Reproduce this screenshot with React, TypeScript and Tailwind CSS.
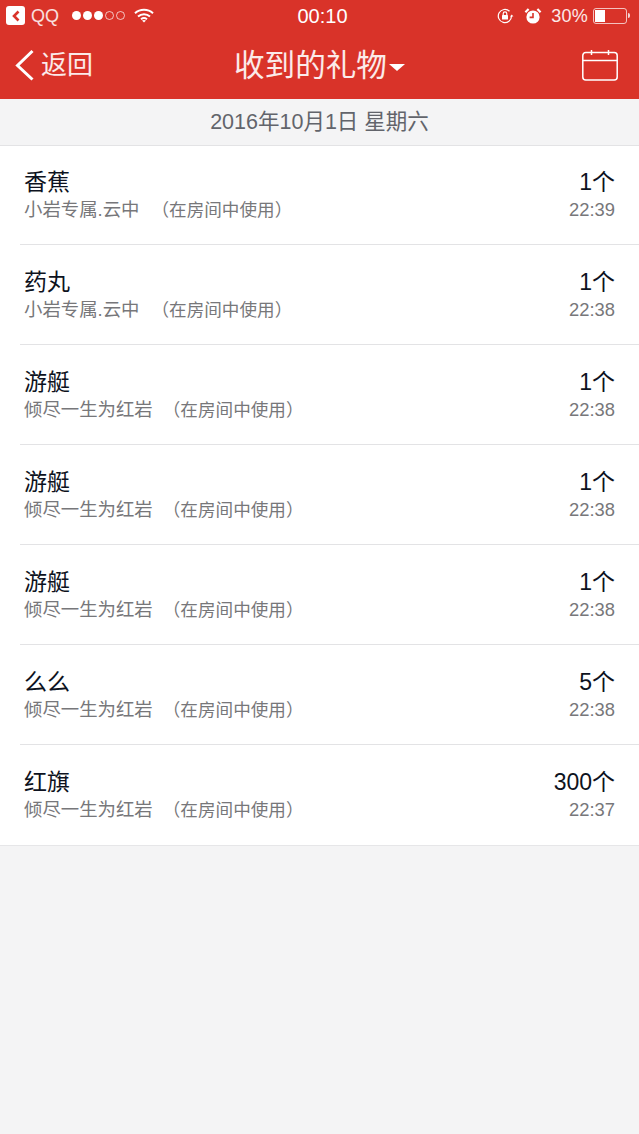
const font = { fontFamily: '"Liberation Sans", "Noto Sans CJK SC", sans-serif' };

const gifts = [
  { name: "香蕉", from: "小岩专属.云中", gap: "ml-[12px]", count: "1个", time: "22:39" },
  { name: "药丸", from: "小岩专属.云中", gap: "ml-[12px]", count: "1个", time: "22:38" },
  { name: "游艇", from: "倾尽一生为红岩", gap: "ml-[10px]", count: "1个", time: "22:38" },
  { name: "游艇", from: "倾尽一生为红岩", gap: "ml-[10px]", count: "1个", time: "22:38" },
  { name: "游艇", from: "倾尽一生为红岩", gap: "ml-[10px]", count: "1个", time: "22:38" },
  { name: "么么", from: "倾尽一生为红岩", gap: "ml-[10px]", count: "5个", time: "22:38" },
  { name: "红旗", from: "倾尽一生为红岩", gap: "ml-[10px]", count: "300个", time: "22:37" },
];

function StatusBar() {
  return (
    <div className="flex h-[31px] items-center justify-between pl-[6px] pr-[9px] text-white">
      <div className="flex flex-1 items-center">
        <div className="flex h-[19px] w-[19px] items-center justify-center rounded-[3px] bg-white">
          <svg width="10" height="12" viewBox="0 0 10 12" fill="none" stroke="#d93329" strokeWidth="2.6">
            <path d="M7.5 1.5 3 6l4.5 4.500" />
          </svg>
        </div>
        <span className="ml-[6px] w-[28px] text-[18px] leading-none text-white/85">QQ</span>
        <div className="ml-[13px] flex items-center gap-[2px]">
          <span className="h-[9px] w-[9px] rounded-full bg-white" />
          <span className="h-[9px] w-[9px] rounded-full bg-white" />
          <span className="h-[9px] w-[9px] rounded-full bg-white" />
          <span className="h-[9px] w-[9px] rounded-full border border-white/70" />
          <span className="h-[9px] w-[9px] rounded-full border border-white/70" />
        </div>
        <svg className="ml-[9px]" width="20" height="15" viewBox="0 0 20 15" fill="none" stroke="#fff" strokeWidth="2">
          <path d="M1 5.200c5-4.600 13-4.600 18 0" />
          <path d="M4 8.400c3.400-3 8.600-3 12 0" />
          <path d="M7 11.200c1.700-1.300 4.300-1.300 6 0" />
          <path d="M10 14.600 8 12.600c1.100-.8 2.900-.8 4 0z" fill="#fff" stroke="none" />
        </svg>
      </div>
      <span className="pointer-events-none absolute left-0 right-0 pl-[6px] text-center text-[20px] leading-none">00:10</span>
      <div className="flex items-center">
        <svg width="19" height="18" viewBox="0 0 19 18" fill="none" stroke="#fff" strokeWidth="1.2">
          <path d="M15.500 9a6.600 6.600 0 1 1-2-4.700" />
          <path d="M15.800 7.400 14 9.600h3.400z" fill="#fff" stroke="none" />
          <rect x="6" y="8" width="6" height="4.600" rx=".6" fill="#fff" stroke="none" />
          <path d="M7.200 8V6.700a1.800 1.800 0 0 1 3.600 0V8" />
        </svg>
        <svg className="ml-[9px]" width="18" height="18" viewBox="0 0 18 18" fill="none">
          <circle cx="9" cy="10" r="6.600" fill="#fff" />
          <path d="M9 6v4.400H5.600" stroke="#d93329" strokeWidth="1.600" />
          <path d="M1.400 5.200 4.600 2M16.600 5.200 13.400 2" stroke="#fff" strokeWidth="2.200" />
        </svg>
        <span className="ml-[9px] text-[18px] leading-none tracking-[0.2px] text-white/90">30%</span>
        <div className="ml-[5px] h-[16px] w-[34px] rounded-[3px] border border-white/70 p-[1px]">
          <div className="h-full w-[10px] bg-white" />
        </div>
        <div className="ml-[1px] h-[5px] w-[2px] rounded-r-sm bg-white/80" />
      </div>
    </div>
  );
}

function NavBar() {
  return (
    <div className="relative flex h-[68px] items-center justify-between pb-[1px] pl-[15px] pr-[21px] text-white">
      <div className="flex items-center">
        <svg width="20" height="32" viewBox="0 0 20 32" fill="none" stroke="#fff" strokeWidth="3">
          <path d="M17.500 2 2.500 16.500 17.500 30.500" />
        </svg>
        <span className="ml-[6px] text-[26px] leading-none text-white/90">返回</span>
      </div>
      <div className="absolute left-[234px] mt-[2px] flex items-center">
        <span className="text-[30.600px] leading-none text-white/90">收到的礼物</span>
        <span className="ml-[2px] mt-[3px] h-0 w-0 border-x-[8px] border-t-[7px] border-x-transparent border-t-white" />
      </div>
      <svg width="36" height="32" viewBox="0 0 36 32" fill="none" stroke="#fff" strokeWidth="1.500">
        <rect x=".8" y="3.500" width="34.400" height="27.500" rx="3" />
        <path d="M.8 11.500h34.400M9.500 1v5M26.500 1v5" />
      </svg>
    </div>
  );
}

function GiftRow({ gift, first, last }: { gift: (typeof gifts)[number]; first: boolean; last: boolean }) {
  return (
    <div className="pl-[20px]">
      <div
        className={`flex justify-between pl-[4px] pr-[24px] ${first ? "h-[99px] pt-[21px]" : "h-[100px] pt-[22px]"} ${
          last ? "" : "border-b border-[#e3e3e5]"
        }`}
      >
        <div>
          <div className="text-[23px] leading-[30px] text-[#0d1220]">{gift.name}</div>
          <div className="text-[18.400px] leading-[26px] text-[#77777a]">
            {gift.from}
            <span className={`${gift.gap} text-[17.600px]`}>（在房间中使用）</span>
          </div>
        </div>
        <div className="text-right">
          <div className="text-[23px] leading-[30px] text-[#0d1220]">{gift.count}</div>
          <div className="text-[18.400px] leading-[26px] text-[#77777a]">{gift.time}</div>
        </div>
      </div>
    </div>
  );
}

export default function App() {
  return (
    <div className="relative flex h-[1134px] w-[639px] flex-col overflow-hidden bg-[#f4f4f5]" style={font}>
      <div className="bg-[#d93329]">
        <StatusBar />
        <NavBar />
      </div>
      <div className="flex h-[47px] items-center justify-center border-b border-[#e3e3e5] pt-[2px] text-[21.500px] leading-none text-[#62646b]">
        2016年10月1日 星期六
      </div>
      <div className="border-b border-[#e6e6e8] bg-white">
        {gifts.map((gift, i) => (
          <GiftRow key={i} gift={gift} first={i === 0} last={i === gifts.length - 1} />
        ))}
      </div>
    </div>
  );
}
